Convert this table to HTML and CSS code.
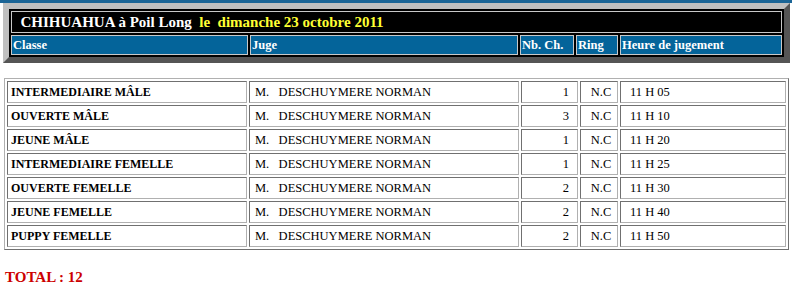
FILE: index.html
```html
<!DOCTYPE html>
<html lang="fr">
<head>
<meta charset="utf-8">
<title>Chihuahua à Poil Long</title>
<link rel="stylesheet" href="styles.css">
</head>
<body>
<div class="topbar"></div>
<table class="frame">
  <tr>
    <td class="title" colspan="5">&nbsp;&nbsp;CHIHUAHUA à Poil Long <span class="date">&nbsp;le&nbsp;&nbsp;dimanche 23 octobre 2011</span></td>
  </tr>
  <tr class="head">
    <th class="c1">Classe</th>
    <th class="c2">Juge</th>
    <th class="c3">Nb. Ch.</th>
    <th class="c4">Ring</th>
    <th class="c5">Heure de jugement</th>
  </tr>
</table>

<table class="list">
  <tr>
    <td class="k1">INTERMEDIAIRE MÂLE</td>
    <td class="k2">M.&nbsp;&nbsp; DESCHUYMERE NORMAN</td>
    <td class="k3">1</td>
    <td class="k4">N.C</td>
    <td class="k5">11 H 05</td>
  </tr>
  <tr>
    <td class="k1">OUVERTE MÂLE</td>
    <td class="k2">M.&nbsp;&nbsp; DESCHUYMERE NORMAN</td>
    <td class="k3">3</td>
    <td class="k4">N.C</td>
    <td class="k5">11 H 10</td>
  </tr>
  <tr>
    <td class="k1">JEUNE MÂLE</td>
    <td class="k2">M.&nbsp;&nbsp; DESCHUYMERE NORMAN</td>
    <td class="k3">1</td>
    <td class="k4">N.C</td>
    <td class="k5">11 H 20</td>
  </tr>
  <tr>
    <td class="k1">INTERMEDIAIRE FEMELLE</td>
    <td class="k2">M.&nbsp;&nbsp; DESCHUYMERE NORMAN</td>
    <td class="k3">1</td>
    <td class="k4">N.C</td>
    <td class="k5">11 H 25</td>
  </tr>
  <tr>
    <td class="k1">OUVERTE FEMELLE</td>
    <td class="k2">M.&nbsp;&nbsp; DESCHUYMERE NORMAN</td>
    <td class="k3">2</td>
    <td class="k4">N.C</td>
    <td class="k5">11 H 30</td>
  </tr>
  <tr>
    <td class="k1">JEUNE FEMELLE</td>
    <td class="k2">M.&nbsp;&nbsp; DESCHUYMERE NORMAN</td>
    <td class="k3">2</td>
    <td class="k4">N.C</td>
    <td class="k5">11 H 40</td>
  </tr>
  <tr>
    <td class="k1">PUPPY FEMELLE</td>
    <td class="k2">M.&nbsp;&nbsp; DESCHUYMERE NORMAN</td>
    <td class="k3">2</td>
    <td class="k4">N.C</td>
    <td class="k5">11 H 50</td>
  </tr>
</table>

<p class="total">TOTAL : 12</p>
</body>
</html>
```

FILE: styles.css
```css
html, body {
  margin: 0;
  padding: 0;
  background: #ffffff;
  font-family: "Liberation Serif", "Times New Roman", serif;
  color: #000;
}

.topbar {
  height: 3px;
  background: #1b6596;
}

.frame {
  margin-left: 3px;
  border-collapse: separate;
  border-spacing: 2px;
  background: #000;
  border-style: solid;
  border-width: 6px;
  border-color: #c0c0c0 #555555 #555555 #c0c0c0;
  table-layout: fixed;
}

.frame td, .frame th {
  box-sizing: border-box;
  padding: 0 1px;
}

.title {
  height: 22px;
  border: 1px solid #c8c8c8;
  color: #ffffff;
  font-weight: bold;
  font-size: 15px;
  white-space: nowrap;
  text-align: left;
}

.date {
  color: #ffff33;
}

.head th {
  height: 20px;
  background: #04649a;
  border: 1px solid #c8c8c8;
  color: #ffffff;
  font-size: 12.5px;
  font-weight: bold;
  text-align: left;
  white-space: nowrap;
}

.c1 { width: 237px; }
.c2 { width: 268px; }
.c3 { width: 54px; }
.c4 { width: 42px; }
.c5 { width: 162px; }

.list {
  margin-top: 15px;
  margin-left: 4px;
  border-collapse: separate;
  border-spacing: 2px;
  border-style: solid;
  border-width: 1px;
  border-color: #b0b0b0 #707070 #707070 #b0b0b0;
  table-layout: fixed;
}

.list td {
  box-sizing: border-box;
  height: 22px;
  padding: 0 3px;
  border-style: solid;
  border-width: 1px;
  border-color: #707070 #b0b0b0 #b0b0b0 #707070;
  font-size: 12.5px;
  white-space: nowrap;
}

.k1 { width: 240px; font-weight: bold; }
.k2 { width: 270px; }
.k3 { width: 57px; text-align: right; }
.k4 { width: 38px; text-align: center; }
.k5 { width: 166px; }

.list td.k1 { font-size: 12px; }
.list td.k2 { padding-left: 5px; }
.list td.k3 { padding-right: 8px; }
.list td.k4 { padding-left: 5px; padding-right: 1px; }
.list td.k5 { padding-left: 9px; }

.total {
  margin: 19px 0 0 5px;
  color: #cc0000;
  font-weight: bold;
  font-size: 15px;
}
```
